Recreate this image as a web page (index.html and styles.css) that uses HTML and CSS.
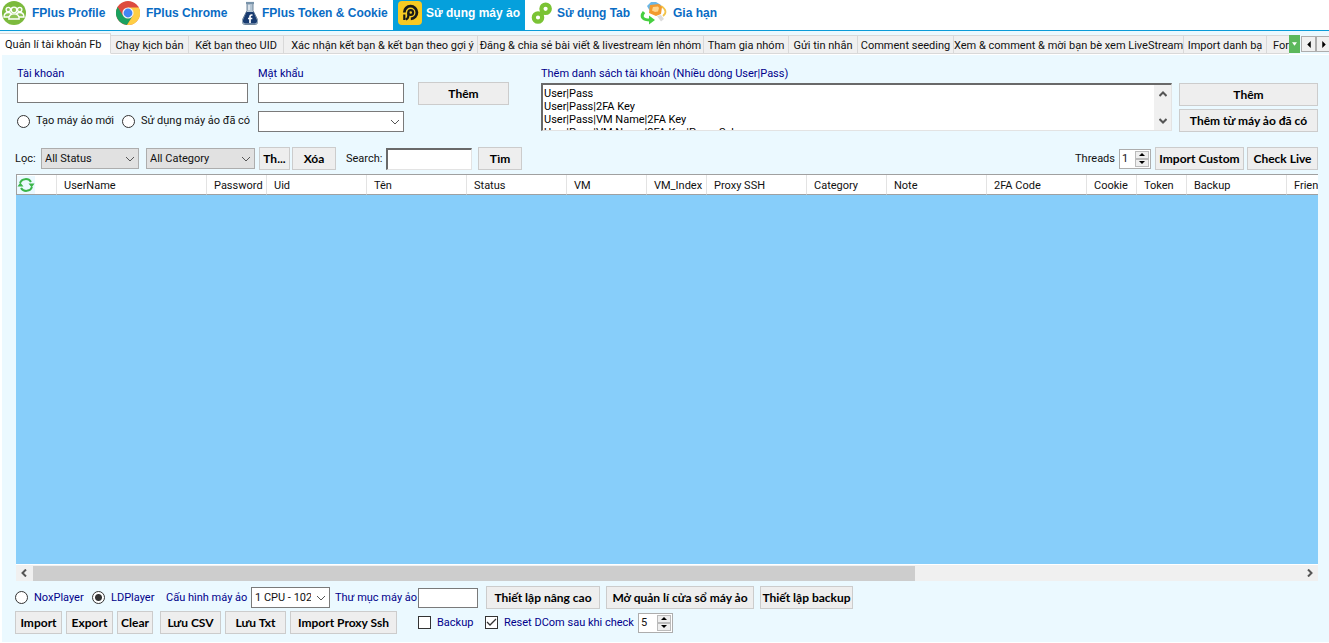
FILE: index.html
```html
<!DOCTYPE html>
<html lang="vi">
<head>
<meta charset="utf-8">
<title>FPlus</title>
<link rel="stylesheet" href="styles.css">
</head>
<body>
<nav class="topbar">
  <a class="top-item w-profile" href="#">
    <svg class="top-icon" viewBox="0 0 24 24"><circle cx="12" cy="12" r="12" fill="#7cba3d"/><g fill="#8fc455" stroke="#fff" stroke-width="1.3"><circle cx="6.300" cy="8.500" r="2.200"/><circle cx="17.700" cy="8.500" r="2.200"/><path d="M2 16c0-3 2-4.500 4.500-4.500S10 13 10 16zM14 16c0-3 1-4.500 3.500-4.500S22 13 22 16z"/><circle cx="12" cy="9" r="2.800"/><path d="M6.800 18c0-4 2-5.200 5.200-5.200s5.200 1.200 5.200 5.200z"/></g></svg>
    <span>FPlus Profile</span>
  </a>
  <a class="top-item w-chrome" href="#">
    <svg class="top-icon" viewBox="0 0 24 24"><circle cx="12" cy="12" r="12" fill="#dd4b3e"/><path d="M1.600 6 7.200 15 12 17.500 16.500 15.500 11 24A12 12 0 0 1 1.600 6z" fill="#1aa15f"/><path d="M12 6.500h10.700A12 12 0 0 1 11 24l6-9.500z" fill="#ffce44"/><circle cx="12" cy="12" r="5.600" fill="#f4f4f4"/><circle cx="12" cy="12" r="4.400" fill="#4285f4"/></svg>
    <span>FPlus Chrome</span>
  </a>
  <a class="top-item w-token" href="#">
    <svg class="top-icon narrow" viewBox="0 0 16 24"><path d="M5 2.500h6v7l4.500 9c1.200 3-.3 5-2.500 5H3c-2.200 0-3.700-2-2.500-5L5 9.500z" fill="#b4c5d4" stroke="#71869b"/><path d="M4.500 11h7l3.300 7.500c.8 2.500-.3 4-2 4H3.200c-1.700 0-2.800-1.500-2-4z" fill="#183b70"/><path d="M4 2h8" stroke="#7893a9" stroke-width="2.200"/><path d="M7 4v5" stroke="#fff"/><path d="M10.500 14h-.8c-1.200 0-1.700.6-1.700 1.700v6.300M6 17.500h4.300" fill="none" stroke="#fff" stroke-width="1.700"/></svg>
    <span>FPlus Token &amp; Cookie</span>
  </a>
  <a class="top-item w-vm active" href="#" aria-current="page">
    <svg class="top-icon" viewBox="0 0 24 24"><rect width="24" height="24" rx="4" fill="#f7c923"/><path d="M6.300 11.500A6.300 6.300 0 1 1 12.800 17.800" fill="none" stroke="#191919" stroke-width="2.800"/><circle cx="12.700" cy="11.500" r="2.400" fill="none" stroke="#191919" stroke-width="2.200"/><path d="M10.300 11.500v3.500c0 2-1 3-2.500 3.500M6.300 13.500v5.500" fill="none" stroke="#191919" stroke-width="2.200"/></svg>
    <span>Sử dụng máy ảo</span>
  </a>
  <a class="top-item w-tab" href="#">
    <svg class="top-icon" viewBox="0 0 24 24"><g fill="none" stroke="#7bc335" stroke-width="4.200"><circle cx="14.600" cy="7.800" r="4.200"/><circle cx="7" cy="16.500" r="4.200"/></g><path d="m9.500 13.500 3-3" stroke="#7bc335" stroke-width="5"/></svg>
    <span>Sử dụng Tab</span>
  </a>
  <a class="top-item w-renew" href="#">
    <svg class="top-icon wide" viewBox="0 0 27 24"><path d="M21 5c5 3 6 7 2 10" fill="none" stroke="#f2c44b" stroke-width="1.800"/><path d="m7 5 4-4 5 0 5 3-1 5-9 3z" fill="#6ab7e8"/><path d="m10 4 9-1 3 3-1 7-5 2-7-3z" fill="#f29a2e"/><path d="m13 6 5-.5 1 1.500-1 3.500-3 .5-3-1.500z" fill="#ffd58b"/><path d="M4 11c-4 5-1 8 6 8" fill="none" stroke="#46cf40" stroke-width="3"/><path d="m9 14.500 6 4.500-6 4.500z" fill="#46cf40"/><path d="m17 15 4-1 3 4-3 2.500z" fill="#dcdcdc"/></svg>
    <span>Gia hạn</span>
  </a>
</nav>

<div class="tabs">
  <button class="tab t1 selected" type="button">Quản lí tài khoản Fb</button>
  <button class="tab t2" type="button">Chạy kịch bản</button>
  <button class="tab t3" type="button">Kết bạn theo UID</button>
  <button class="tab t4" type="button">Xác nhận kết bạn &amp; kết bạn theo gợi ý</button>
  <button class="tab t5" type="button">Đăng &amp; chia sẻ bài viết &amp; livestream lên nhóm</button>
  <button class="tab t6" type="button">Tham gia nhóm</button>
  <button class="tab t7" type="button">Gửi tin nhắn</button>
  <button class="tab t8" type="button">Comment seeding</button>
  <button class="tab t9" type="button">Xem &amp; comment &amp; mời bạn bè xem LiveStream</button>
  <button class="tab t10" type="button">Import danh bạ</button>
  <button class="tab t11" type="button">Forw</button>
  <button class="tab-menu" type="button" aria-label="Danh sách tab"><svg viewBox="0 0 6 4"><path d="M0 0h6L3 4z" fill="#fff"/></svg></button>
  <div class="tab-scroll">
    <button type="button" aria-label="Trước"><svg viewBox="0 0 4 8"><path d="M4 0v8L0 4z"/></svg></button>
    <button type="button" aria-label="Sau"><svg viewBox="0 0 4 8"><path d="M0 0v8l4-4z"/></svg></button>
  </div>
</div>

<main class="page">
  <section class="entry">
    <div class="account">
      <label for="user">Tài khoản</label>
      <input class="box" id="user" type="text">
      <div class="radios">
        <label class="choice"><input type="radio" name="vm">Tạo máy ảo mới</label>
        <label class="choice"><input type="radio" name="vm">Sử dụng máy ảo đã có</label>
      </div>
    </div>
    <div class="password">
      <label for="pass">Mật khẩu</label>
      <input class="box" id="pass" type="text">
      <select class="combo" aria-label="Máy ảo"><option></option></select>
    </div>
    <button class="btn add" type="button">Thêm</button>
    <div class="bulk">
      <label for="list">Thêm danh sách tài khoản (Nhiều dòng User|Pass)</label>
      <div class="memo">
        <textarea id="list">User|Pass
User|Pass|2FA Key
User|Pass|VM Name|2FA Key
User|Pass|VM Name|2FA Key|Proxy Ssh</textarea>
        <div class="vscroll">
          <svg viewBox="0 0 8 6"><path d="M0.500 5 4 1.500 7.500 5"/></svg>
          <svg viewBox="0 0 8 6"><path d="M0.500 1 4 4.500 7.500 1"/></svg>
        </div>
      </div>
    </div>
    <div class="bulk-actions">
      <button class="btn" type="button">Thêm</button>
      <button class="btn" type="button">Thêm từ máy ảo đã có</button>
    </div>
  </section>

  <section class="filters">
    <label class="lbl-filter" for="status">Lọc:</label>
    <select class="combo grey w-status" id="status"><option>All Status</option></select>
    <select class="combo grey w-category" aria-label="Category"><option>All Category</option></select>
    <button class="btn w-th" type="button">Th...</button>
    <button class="btn w-del" type="button">Xóa</button>
    <label class="lbl-search" for="search">Search:</label>
    <input class="sunken" id="search" type="text">
    <button class="btn w-find" type="button">Tìm</button>
    <label class="lbl-threads" for="threads">Threads</label>
    <div class="spin"><input id="threads" type="text" value="1"><div class="spin-keys"><button type="button" aria-label="Tăng"><svg viewBox="0 0 6 3"><path d="M0 3h6L3 0z"/></svg></button><button type="button" aria-label="Giảm"><svg viewBox="0 0 6 3"><path d="M0 0h6L3 3z"/></svg></button></div></div>
    <button class="btn w-custom" type="button">Import Custom</button>
    <button class="btn w-live" type="button">Check Live</button>
  </section>

  <section class="grid">
    <div class="grid-view">
      <table>
        <colgroup><col class="c40"><col class="c150"><col class="c60"><col class="c100"><col class="c100"><col class="c100"><col class="c80"><col class="c60"><col class="c100"><col class="c80"><col class="c100"><col class="c100"><col class="c50"><col class="c50"><col class="c100"><col class="c100"></colgroup>
        <thead><tr>
          <th class="refresh"><button type="button" aria-label="Tải lại"><svg viewBox="0 0 18 18"><g fill="none" stroke="#3bb54a" stroke-width="2"><path d="M3 7a6 5.500 0 0 1 11-1"/><path d="M15 11a6 5.500 0 0 1-11 1"/></g><path d="M11.500 7.500h6l-2.800 4zM.5 10.500h6L3.300 6.500z" fill="#3bb54a"/></svg></button></th>
          <th>UserName</th><th>Password</th><th>Uid</th><th>Tên</th><th>Status</th><th>VM</th><th>VM_Index</th><th>Proxy SSH</th><th>Category</th><th>Note</th><th>2FA Code</th><th>Cookie</th><th>Token</th><th>Backup</th><th>Friend</th>
        </tr></thead>
      </table>
    </div>
    <div class="hscroll">
      <svg viewBox="0 0 6 8"><path d="M5 0.500 1.500 4 5 7.500"/></svg>
      <div class="track"><div class="thumb"></div></div>
      <svg viewBox="0 0 6 8"><path d="M1 0.500 4.500 4 1 7.500"/></svg>
    </div>
  </section>

  <section class="players">
    <label class="choice nox"><input type="radio" name="player">NoxPlayer</label>
    <label class="choice ld"><input type="radio" name="player" checked>LDPlayer</label>
    <label class="lbl-config" for="config">Cấu hình máy ảo</label>
    <select class="combo w-config" id="config"><option>1 CPU - 1024</option></select>
    <label class="lbl-folder" for="folder">Thư mục máy ảo</label>
    <input class="box w-folder" id="folder" type="text">
    <button class="btn w-adv" type="button">Thiết lập nâng cao</button>
    <button class="btn w-open" type="button">Mở quản lí cửa sổ máy ảo</button>
    <button class="btn w-backup" type="button">Thiết lập backup</button>
  </section>

  <section class="actions">
    <button class="btn w-import" type="button">Import</button>
    <button class="btn w-export" type="button">Export</button>
    <button class="btn w-clear" type="button">Clear</button>
    <button class="btn w-csv" type="button">Lưu CSV</button>
    <button class="btn w-txt" type="button">Lưu Txt</button>
    <button class="btn w-proxy" type="button">Import Proxy Ssh</button>
    <label class="choice backup"><input type="checkbox">Backup</label>
    <label class="choice reset"><input type="checkbox" checked>Reset DCom sau khi check</label>
    <div class="spin spin-wide"><input type="text" value="5" aria-label="Reset DCom"><div class="spin-keys"><button type="button" aria-label="Tăng"><svg viewBox="0 0 6 3"><path d="M0 3h6L3 0z"/></svg></button><button type="button" aria-label="Giảm"><svg viewBox="0 0 6 3"><path d="M0 0h6L3 3z"/></svg></button></div></div>
  </section>
</main>
</body>
</html>
```
FILE: styles.css
```css
* { box-sizing: border-box; }
html { height: 100%; }
body {
  margin: 0;
  min-height: 100%;
  display: flex;
  flex-direction: column;
  background: #fff;
  color: #111;
  font: 11px/14px Roboto, "Liberation Sans", sans-serif;
  overflow: hidden;
}
button, input, select, textarea { font: inherit; color: inherit; margin: 0; border-radius: 0; }
button { padding: 0; white-space: nowrap; }
svg { display: block; }
label { white-space: nowrap; }

/* Top navigation */
.topbar { display: flex; height: 31px; border-bottom: 1px solid #0a9bd8; background: #fff; }
.top-item {
  display: flex;
  gap: 6px;
  padding: 1px 0 0 2px;
  height: 30px;
  color: #0a6cc4;
  font: bold 12px/24px "Liberation Sans", Arial, sans-serif;
  text-decoration: none;
  white-space: nowrap;
}
.top-icon { width: 24px; height: 24px; flex: none; }
.top-icon.narrow { width: 16px; }
.top-icon.wide { width: 27px; }
.w-profile { width: 114px; }
.w-chrome { width: 126px; }
.w-token { width: 153px; gap: 4px; }
.w-vm { width: 132px; padding-left: 5px; gap: 4px; }
.w-tab { width: 113px; padding-left: 6px; gap: 2px; }
.top-item.active { background: #05a0dc; color: #fff; }

/* Tab strip */
.tabs { display: flex; align-items: flex-end; height: 24px; background: #ebf9ff; border-bottom: 1px solid #fff; }
.tab {
  flex: none;
  height: 19px;
  padding-top: 2px;
  border: solid #d9d9d9;
  border-width: 1px 1px 1px 0;
  background: #f0f0f0;
  text-align: center;
  line-height: 15px;
  overflow: hidden;
}
.tab.selected { height: 21px; background: #fff; border-bottom-color: #fff; }
.t1 { width: 111px; text-align: left; padding-left: 5px; }
.t2 { width: 78px; }
.t3 { width: 95px; }
.t4 { width: 194px; padding-left: 4px; }
.t5 { width: 226px; }
.t6 { width: 85px; }
.t7 { width: 69px; }
.t8 { width: 96px; }
.t9 { width: 230px; }
.t10 { width: 83px; }
.t11 { flex: 1 1 0; min-width: 0; text-align: left; padding-left: 6px; border-right: 0; }
.tab-menu { width: 11px; height: 18px; flex: none; border: 0; background: #5cb85c; display: grid; place-items: center; margin-bottom: 1px; }
.tab-menu svg { width: 5px; height: 4px; }
.tab-scroll { display: flex; width: 29px; flex: none; overflow: hidden; padding: 0 0 2px 1px; }
.tab-scroll button { width: 15px; height: 16px; flex: none; border: 1px solid #adadad; background: #f0f0f0; display: grid; place-items: center; }
.tab-scroll svg { width: 4px; height: 7px; }

/* Page body */
.page {
  flex: 1;
  display: flex;
  flex-direction: column;
  margin: 0 0 1px 2px;
  padding: 10px 11px 8px 13px;
  background: #ebf9ff;
}
.btn {
  height: 23px;
  flex: none;
  border: 1px solid #ccc;
  background: #eee;
  color: #000;
  font: bold 12px/14px Lato, "Open Sans", sans-serif;
}
.box { height: 20px; border: 1px solid #7a7a7a; background: #fff; padding: 0 3px; min-width: 0; }
.combo {
  appearance: none;
  height: 21px;
  border: 1px solid #7a7a7a;
  padding: 1px 18px 0 3px;
  flex: none;
  background: #fff url("data:image/svg+xml,%3Csvg xmlns='http://www.w3.org/2000/svg' width='10' height='6'%3E%3Cpath d='M1 1l4 4 4-4' fill='none' stroke='%23555'/%3E%3C/svg%3E") no-repeat right 3px center;
}
.combo.grey { border-color: #adadad; background-color: #e1e1e1; }

.entry { display: flex; align-items: flex-start; color: #00008b; padding-left: 2px; }
.account { width: 231px; display: flex; flex-direction: column; margin-right: 10px; }
.password { width: 146px; display: flex; flex-direction: column; margin-right: 14px; }
.account > label, .password > label, .bulk > label { height: 18px; line-height: 18px; }
.password .combo { margin-top: 8px; }
.radios { display: flex; margin-top: 10px; gap: 8px; color: #111; line-height: 16px; }
.choice { display: flex; align-items: center; gap: 6px; }
.choice input { appearance: none; width: 13px; height: 13px; border: 1px solid #333; background: #fff; flex: none; }
.choice input[type="radio"] { border-radius: 50%; }
.choice input[type="radio"]:checked { background: radial-gradient(circle, #333 3px, #fff 4px); }
.choice input[type="checkbox"]:checked { background: #fff url("data:image/svg+xml,%3Csvg xmlns='http://www.w3.org/2000/svg' width='11' height='11'%3E%3Cpath d='M1 5l3 3 6-6' fill='none' stroke='%23333' stroke-width='1.300'/%3E%3C/svg%3E") center; }
.add { width: 91px; margin: 17px 32px 0 0; }
.bulk { flex: 1; min-width: 0; display: flex; flex-direction: column; margin-right: 7px; }
.memo { display: flex; height: 48px; border: solid; border-width: 2px 1px 1px 2px; border-color: #696969 #e3e3e3 #e3e3e3 #696969; background: #fff; }
.memo textarea { flex: 1; border: 0; padding: 2px 1px 0; line-height: 13px; color: #000; resize: none; overflow: hidden; background: none; }
.vscroll { width: 17px; background: #f0f0f0; display: flex; flex-direction: column; justify-content: space-between; align-items: center; padding: 6px 0; }
.vscroll svg, .hscroll svg { fill: none; stroke: #555; stroke-width: 2; flex: none; }
.vscroll svg { width: 8px; height: 6px; }
.bulk-actions { width: 139px; display: flex; flex-direction: column; gap: 3px; margin-top: 18px; }

.filters { display: flex; align-items: center; margin-top: 15px; height: 23px; }
.lbl-filter { width: 26px; }
.w-status { width: 98px; margin-right: 7px; }
.w-category { width: 109px; margin-right: 4px; }
.w-th { width: 31px; margin-right: 2px; }
.w-del { width: 44px; margin-right: 10px; }
.lbl-search { width: 40px; }
.sunken { width: 86px; height: 22px; border: solid; border-width: 2px 1px 1px 2px; border-color: #696969 #e3e3e3 #e3e3e3 #696969; background: #fff; }
.w-find { width: 44px; margin-left: 6px; }
.lbl-threads { margin-left: auto; margin-right: 4px; }
.spin { display: flex; width: 32px; height: 20px; border: 1px solid #adadad; background: #fff; padding: 1px; flex: none; color: #111; }
.spin-wide { width: 35px; }
.spin > input { flex: 1; min-width: 0; border: 0; padding: 0 0 0 1px; background: none; }
.spin-keys { width: 14px; display: flex; flex-direction: column; }
.spin-keys button { flex: 1; min-height: 0; border: 1px solid #bbb; background: #eee; display: grid; place-items: center; }
.spin-keys svg { width: 6px; height: 3px; }
.w-custom { width: 89px; margin: 0 3px 0 4px; }
.w-live { width: 71px; }

.grid { flex: 1; display: flex; flex-direction: column; margin: 4px 0 5px 1px; min-height: 0; }
.grid-view { flex: 1; overflow: hidden; background: #87cefa; border-top: 1px solid #a0a0a0; }
table { width: 1370px; table-layout: fixed; border-collapse: separate; border-spacing: 0; background: #fff; }
th { height: 20px; padding: 2px 0 0 7px; font-weight: normal; text-align: left; border-right: 1px solid #e3e3e3; border-bottom: 1px solid #a0a0a0; white-space: nowrap; }
.refresh { padding: 0; border-left: 1px solid #a0a0a0; }
.refresh button { width: 18px; height: 18px; border: 0; background: #ebf9ff; display: block; }
.c40 { width: 41px; } .c50 { width: 50px; } .c60 { width: 60px; } .c80 { width: 80px; } .c100 { width: 100px; } .c150 { width: 150px; }
.hscroll { display: flex; align-items: center; height: 17px; background: #f0f0f0; border-top: 1px solid #fff; padding: 0 5px; }
.hscroll svg { width: 6px; height: 8px; }
.track { flex: 1; display: grid; grid-template-columns: 16fr 7fr; margin: 0 6px; height: 15px; }
.thumb { background: #cdcdcd; }

.players, .actions { display: flex; align-items: center; color: #00008b; height: 23px; }
.players .combo { color: #111; }
.nox { width: 77px; }
.ld { width: 74px; }
.lbl-config { width: 85px; }
.w-config { width: 79px; margin-right: 5px; }
.lbl-folder { width: 83px; }
.w-folder { width: 60px; margin-right: 8px; }
.w-adv { width: 114px; margin-right: 6px; }
.w-open { width: 148px; margin-right: 6px; }
.w-backup { width: 93px; }
.actions { margin-top: 2px; }
.w-import { width: 47px; margin-right: 4px; }
.w-export { width: 47px; margin-right: 4px; }
.w-clear { width: 36px; margin-right: 7px; }
.w-csv { width: 61px; margin-right: 4px; }
.w-txt { width: 61px; margin-right: 4px; }
.w-proxy { width: 107px; margin-right: 21px; }
.backup { width: 67px; }
.reset { width: 153px; }
```
